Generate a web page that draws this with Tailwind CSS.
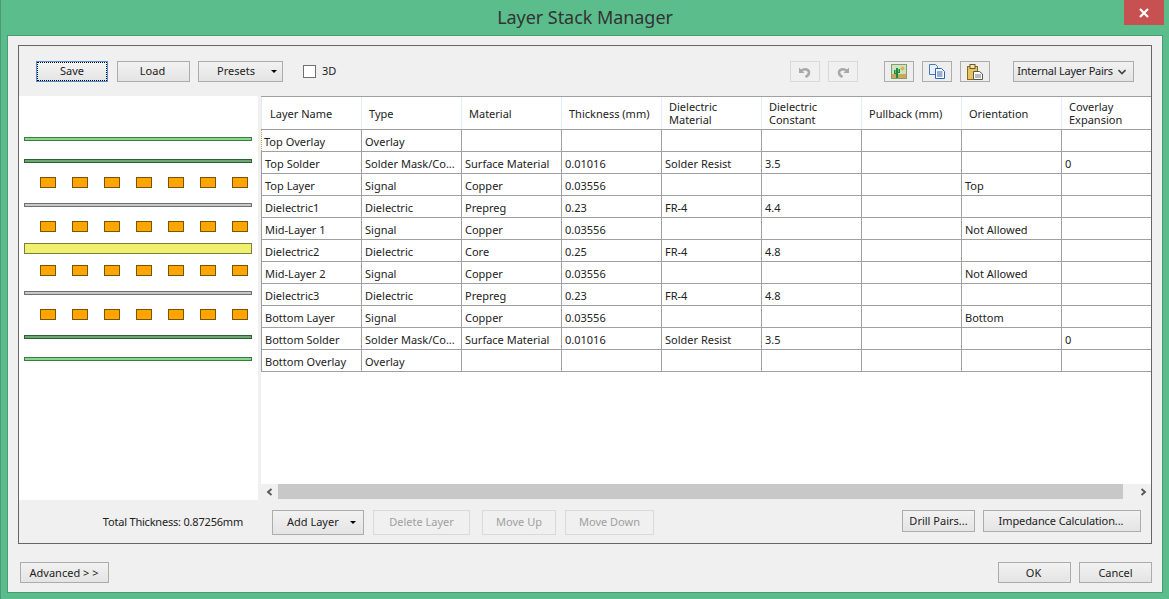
<!DOCTYPE html>
<html lang="en">
<head>
  <meta charset="UTF-8" />
  <title>Layer Stack Manager</title>
  <script src="https://cdn.jsdelivr.net/npm/@tailwindcss/browser@4"></script>
</head>
<body class="w-[1169px] h-[599px] overflow-hidden bg-[#5bbd8c] shadow-[inset_1px_0_0_#4a9a72] font-['Noto_Sans','Open_Sans',sans-serif] text-[11px] text-[#222]">

  <!-- title bar -->
  <div class="relative h-[35px] pt-[4px] pl-[1px] text-center text-[18px] leading-[26px] tracking-[-0.05px] text-[#333]">
    Layer Stack Manager
    <div class="absolute right-[5px] top-0 w-[40px] h-[25px] bg-[#c75050] flex items-center justify-center">
      <svg width="12" height="12" viewBox="0 0 12 12"><path d="M2 2l8 8M10 2l-8 8" stroke="#fff" stroke-width="2.2"/></svg>
    </div>
  </div>

  <!-- client area -->
  <div class="ml-[7px] w-[1156px] h-[558px] border border-[#4a9a72] bg-[#f0f0f0] px-[10px] pt-[9px] flex flex-col">

    <div class="w-[1134px] h-[499px] border border-[#666] flex flex-col">
      <!-- toolbar -->
      <div class="h-[50px] shrink-0 flex items-center pt-[1px] pl-[17px]">
        <button class="w-[72px] h-[21px] border border-[#4a90d9] bg-linear-to-b from-[#f4f4f4] to-[#e4e4e4] outline-1 outline-dotted outline-black -outline-offset-2">Save</button>
        <button class="w-[73px] h-[21px] ml-[9px] pr-[2px] border border-[#acacac] bg-linear-to-b from-[#f2f2f2] to-[#e4e4e4]">Load</button>
        <button class="w-[85px] h-[21px] ml-[8px] border border-[#acacac] bg-linear-to-b from-[#f2f2f2] to-[#e4e4e4] flex items-center pl-[18px] pr-[5px] justify-between">Presets<span class="border-x-[3px] border-t-[3px] border-x-transparent border-t-black"></span></button>
        <span class="w-[13px] h-[13px] ml-[20px] border border-[#707070] bg-white"></span>
        <span class="ml-[6px]">3D</span>

        <button class="w-[30px] h-[21px] ml-[454px] border border-[#d9d9d9] bg-[#f0f0f0] flex items-center justify-center">
          <svg width="14" height="14" viewBox="0 0 14 14"><path d="M1 2.500V8h5.500z" fill="#a8a8a8"/><path d="M3.500 5.500C7 3 11 4.500 11 7.500c0 2-1.500 3.500-3.500 4.500" fill="none" stroke="#a8a8a8" stroke-width="2.500"/></svg>
        </button>
        <button class="w-[30px] h-[21px] ml-[8px] border border-[#d9d9d9] bg-[#f0f0f0] flex items-center justify-center">
          <svg width="14" height="14" viewBox="0 0 14 14"><path d="M13 2.500V8H7.500z" fill="#a8a8a8"/><path d="M10.500 5.500C7 3 3 4.500 3 7.500c0 2 1.500 3.500 3.500 4.500" fill="none" stroke="#a8a8a8" stroke-width="2.500"/></svg>
        </button>
        <button class="w-[30px] h-[21px] ml-[26px] border border-[#acacac] bg-[#eee] flex items-center justify-center">
          <svg width="16" height="15" viewBox="0 0 16 15">
            <rect x=".5" y=".5" width="15" height="14" fill="#cfe3c4" stroke="#8a9a70"/>
            <rect x="1" y="10" width="14" height="4" fill="#c9a85a"/>
            <circle cx="11.500" cy="4.500" r="2" fill="#d8b65a"/>
            <path d="M5 14V4h2v10zM3 6h1.500v3H5v1H3zM9 5H7.500v3H7v1h2z" fill="#1f8a3a"/>
          </svg>
        </button>
        <button class="w-[30px] h-[21px] ml-[8px] border border-[#acacac] bg-[#eee] flex items-center justify-center">
          <svg width="17" height="15" viewBox="0 0 17 15">
            <path d="M.5.500h6l2 2v8h-8z" fill="#e8f0fb" stroke="#4a78b8"/>
            <path d="M6.500 4.500h6l3 3v7h-9z" fill="#fff" stroke="#2f63ad"/>
            <path d="M8 8h5.500M8 10h5.500M8 12h5.500" stroke="#2f63ad"/>
          </svg>
        </button>
        <button class="w-[30px] h-[21px] ml-[8px] border border-[#acacac] bg-[#eee] flex items-center justify-center">
          <svg width="17" height="16" viewBox="0 0 17 16">
            <rect x=".5" y="2.500" width="10" height="13" fill="#e8c25a" stroke="#8a6a20"/>
            <rect x="3" y=".5" width="5" height="4" fill="#f4e4a8" stroke="#6a5a30"/>
            <path d="M6.500 7.500h6l3 2.500v5.500h-9z" fill="#fff" stroke="#555"/>
            <path d="M8 11h6M8 13h6" stroke="#777"/>
          </svg>
        </button>
        <div class="w-[121px] h-[21px] ml-[23px] border border-[#acacac] bg-linear-to-b from-[#f2f2f2] to-[#e4e4e4] flex items-center justify-between whitespace-nowrap tracking-[-0.25px] pl-[3px] pr-[7px]">
          Internal Layer Pairs
          <svg width="8" height="6" viewBox="0 0 8 6"><path d="M.5 1L4 4.500 7.500 1" fill="none" stroke="#444" stroke-width="1.600"/></svg>
        </div>
      </div>

      <!-- stack preview and grid -->
      <div class="h-[404px] shrink-0 flex">
        <div id="stack" class="w-[239px] shrink-0 bg-white flex flex-col pl-[5px] pr-[6px]"></div>

        <div class="ml-[3px] flex-1 min-w-0 bg-white flex flex-col">
          <div class="h-[388px] overflow-hidden border-t border-[#a0a0a0]">
            <table class="table-fixed border-collapse w-[900px]">
              <thead>
                <tr class="h-[32px] text-left">
                  <th class="w-[100px] font-normal px-[8px] pt-[1px] border-l border-r border-[#e4ecf4] border-b border-b-[#a0a0a0] leading-[13px]">Layer Name</th>
                  <th class="w-[100px] font-normal px-[7px] pt-[1px] border-r border-[#e4ecf4] border-b border-b-[#a0a0a0] leading-[13px]">Type</th>
                  <th class="w-[100px] font-normal px-[7px] pt-[1px] border-r border-[#e4ecf4] border-b border-b-[#a0a0a0] leading-[13px]">Material</th>
                  <th class="w-[100px] font-normal px-[7px] pt-[1px] border-r border-[#e4ecf4] border-b border-b-[#a0a0a0] leading-[13px]">Thickness (mm)</th>
                  <th class="w-[100px] font-normal px-[7px] border-r border-[#e4ecf4] border-b border-b-[#a0a0a0] leading-[13px]">Dielectric<br>Material</th>
                  <th class="w-[100px] font-normal px-[7px] border-r border-[#e4ecf4] border-b border-b-[#a0a0a0] leading-[13px]">Dielectric<br>Constant</th>
                  <th class="w-[100px] font-normal px-[7px] pt-[1px] border-r border-[#e4ecf4] border-b border-b-[#a0a0a0] leading-[13px]">Pullback (mm)</th>
                  <th class="w-[100px] font-normal px-[7px] pt-[1px] border-r border-[#e4ecf4] border-b border-b-[#a0a0a0] leading-[13px]">Orientation</th>
                  <th class="w-[100px] font-normal px-[7px] border-b border-b-[#a0a0a0] leading-[13px]">Coverlay<br>Expansion</th>
                </tr>
              </thead>
              <tbody id="rows"></tbody>
            </table>
          </div>
          <!-- horizontal scrollbar -->
          <div class="h-[16px] flex items-start bg-[#f0f0f0]">
            <svg class="mx-[5px] mt-[4px]" width="7" height="8" viewBox="0 0 7 8"><path d="M5.500 1L2 4l3.500 3" fill="none" stroke="#555" stroke-width="1.800"/></svg>
            <div class="w-[845px] h-[15px] bg-[#c8c8c8]"></div>
            <svg class="ml-[17px] mt-[4px]" width="7" height="8" viewBox="0 0 7 8"><path d="M1.500 1L5 4 1.500 7" fill="none" stroke="#555" stroke-width="1.800"/></svg>
          </div>
        </div>
      </div>

      <!-- bottom actions -->
      <div class="flex items-start pt-[10px]">
        <span class="w-[224px] pt-[4px] text-right tracking-[-0.2px]">Total Thickness: 0.87256mm</span>
        <button class="w-[92px] h-[25px] ml-[29px] border border-[#acacac] bg-linear-to-b from-[#f2f2f2] to-[#e4e4e4] flex items-center justify-between pl-[14px] pr-[7px]">Add Layer<span class="border-x-[3px] border-t-[3px] border-x-transparent border-t-black"></span></button>
        <button class="w-[97px] h-[25px] ml-[9px] border border-[#d9d9d9] text-[#a0a0a0]">Delete Layer</button>
        <button class="w-[74px] h-[25px] ml-[12px] border border-[#d9d9d9] text-[#a0a0a0]">Move Up</button>
        <button class="w-[89px] h-[25px] ml-[9px] border border-[#d9d9d9] text-[#a0a0a0]">Move Down</button>
        <button class="w-[73px] h-[22px] ml-[248px] border border-[#acacac] bg-linear-to-b from-[#f2f2f2] to-[#e4e4e4]">Drill Pairs...</button>
        <button class="w-[158px] h-[22px] ml-[8px] pr-[2px] border border-[#acacac] bg-linear-to-b from-[#f2f2f2] to-[#e4e4e4] tracking-[-0.1px]">Impedance Calculation...</button>
      </div>
    </div>

    <!-- dialog buttons -->
    <div class="flex mt-[18px] pl-[2px]">
      <button class="w-[89px] h-[21px] pt-[1px] pr-[1px] border border-[#acacac] bg-linear-to-b from-[#f2f2f2] to-[#e4e4e4]">Advanced &gt; &gt;</button>
      <button class="w-[73px] h-[21px] pt-[1px] pr-[2px] ml-[889px] border border-[#acacac] bg-linear-to-b from-[#f2f2f2] to-[#e4e4e4]">OK</button>
      <button class="w-[73px] h-[21px] pt-[1px] ml-[8px] border border-[#acacac] bg-linear-to-b from-[#f2f2f2] to-[#e4e4e4]">Cancel</button>
    </div>
  </div>

  <script>
    const data = [
      ["Top Overlay", "Overlay", "", "", "", "", "", "", ""],
      ["Top Solder", "Solder Mask/Co...", "Surface Material", "0.01016", "Solder Resist", "3.5", "", "", "0"],
      ["Top Layer", "Signal", "Copper", "0.03556", "", "", "", "Top", ""],
      ["Dielectric1", "Dielectric", "Prepreg", "0.23", "FR-4", "4.4", "", "", ""],
      ["Mid-Layer 1", "Signal", "Copper", "0.03556", "", "", "", "Not Allowed", ""],
      ["Dielectric2", "Dielectric", "Core", "0.25", "FR-4", "4.8", "", "", ""],
      ["Mid-Layer 2", "Signal", "Copper", "0.03556", "", "", "", "Not Allowed", ""],
      ["Dielectric3", "Dielectric", "Prepreg", "0.23", "FR-4", "4.8", "", "", ""],
      ["Bottom Layer", "Signal", "Copper", "0.03556", "", "", "", "Bottom", ""],
      ["Bottom Solder", "Solder Mask/Co...", "Surface Material", "0.01016", "Solder Resist", "3.5", "", "", "0"],
      ["Bottom Overlay", "Overlay", "", "", "", "", "", "", ""]
    ];

    document.getElementById("rows").innerHTML = data.map((row, r) => `<tr class="h-[22px]">` + row.map((cell, c) => {
      const focused = r === 0 && c === 0;
      const base = focused
        ? "px-[2px] pt-[2px] pb-0 leading-[15px] border border-dotted border-[#c8a050] whitespace-nowrap overflow-hidden"
        : "px-[3px] pt-[2px] pb-0 leading-[15px] border border-[#a0a0a0] whitespace-nowrap overflow-hidden";
      return `<td class="${base}">${cell}</td>`;
    }).join("") + `</tr>`).join("");

    // stack preview: [kind, top gap]
    const bar = {
      overlay: "h-[4px] border border-[#3f7a45] bg-[#86d98a]",
      solder: "h-[4px] border border-[#2f5f35] bg-[#6aa870]",
      dielectric: "h-[4px] border border-[#707070] bg-[#c8c8c8]",
      core: "h-[11px] border border-[#7d7d40] bg-[#f0f070]"
    };
    const pads = `<div class="flex justify-between pl-[16px] pr-[4px] h-[11px]">` +
      Array(7).fill(`<span class="w-[16px] h-[11px] border border-[#7a5500] bg-[#ffa500]"></span>`).join("") + `</div>`;
    const stack = [
      [bar.overlay, 41], [bar.solder, 18], [null, 14], [bar.dielectric, 15], [null, 14],
      [bar.core, 11], [null, 11], [bar.dielectric, 15], [null, 14], [bar.solder, 15], [bar.overlay, 18]
    ];
    document.getElementById("stack").innerHTML = stack.map(([cls, gap]) =>
      `<div style="margin-top:${gap}px">` + (cls ? `<div class="${cls}"></div>` : pads) + `</div>`
    ).join("");
  </script>
</body>
</html>
